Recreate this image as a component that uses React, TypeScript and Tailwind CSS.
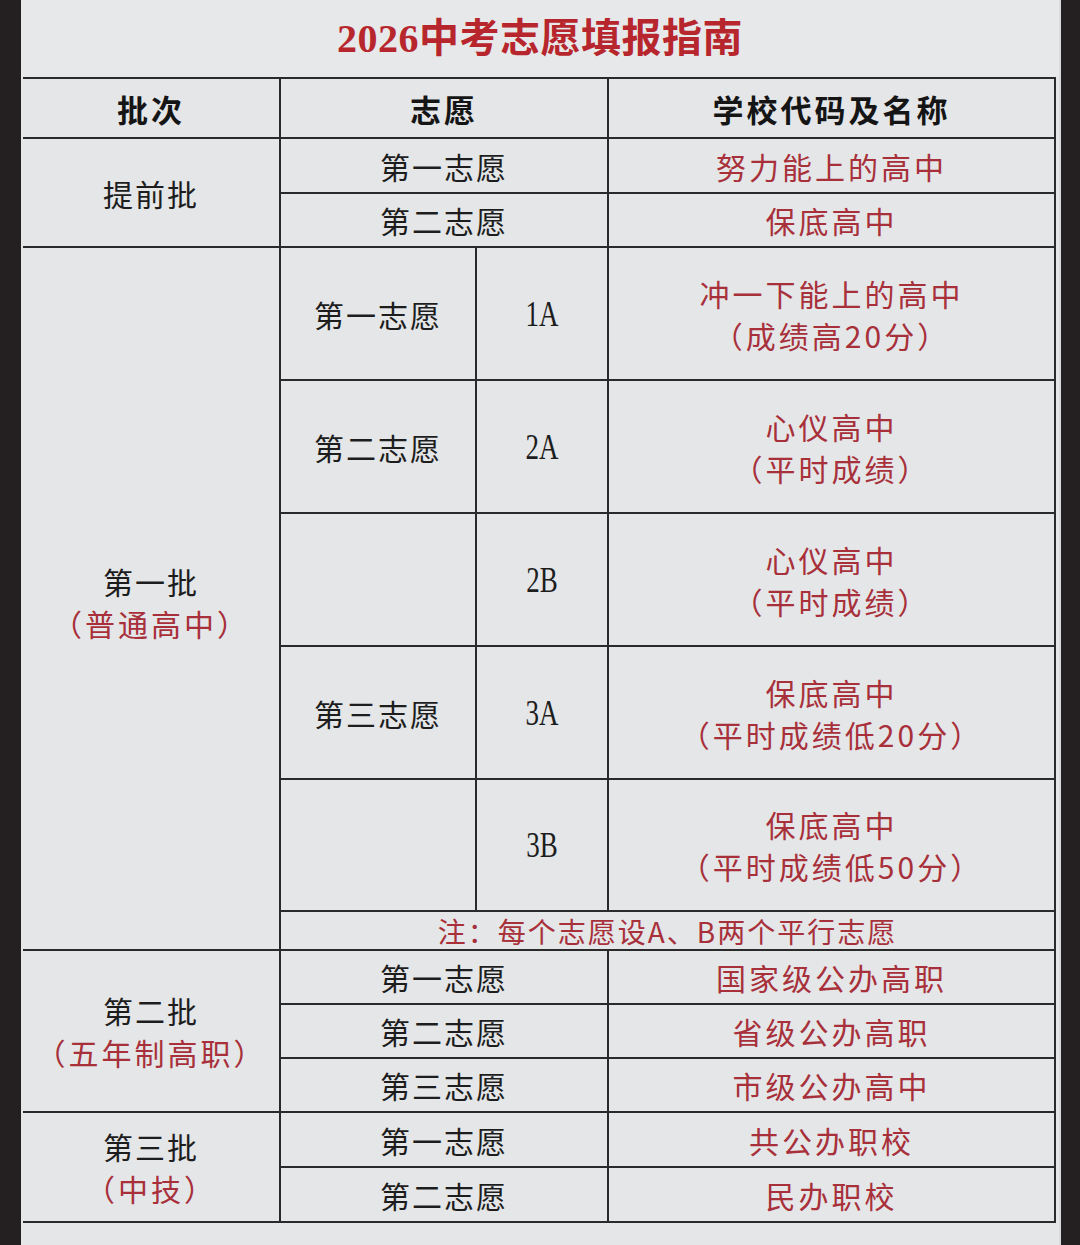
const cell = "flex flex-col items-center justify-center bg-[#e4e6e8] text-center";
const cjk = "font-['Noto_Sans_CJK_SC',sans-serif]";
const black = `${cjk} text-[30px] leading-none tracking-[2px] text-[#1d1d1d]`;
const blackLine = `${cjk} text-[30px] leading-[42px] tracking-[2px] text-[#1d1d1d]`;
const red = `${cjk} text-[30px] leading-[42px] tracking-[3px] text-[#a8303a]`;
const redOne = `${cjk} text-[30px] leading-none tracking-[3px] text-[#a8303a]`;
const redSub = `${cjk} text-[30px] leading-[42px] tracking-[3px] text-[#a8303a]`;
const head = `${cjk} text-[31px] leading-none font-bold tracking-[3px] text-[#151515]`;

const firstBatch = [
  { wish: "第一志愿", code: "1A", school: "冲一下能上的高中", note: "（成绩高20分）" },
  { wish: "第二志愿", code: "2A", school: "心仪高中", note: "（平时成绩）" },
  { wish: "", code: "2B", school: "心仪高中", note: "（平时成绩）" },
  { wish: "第三志愿", code: "3A", school: "保底高中", note: "（平时成绩低20分）" },
  { wish: "", code: "3B", school: "保底高中", note: "（平时成绩低50分）" },
];

function SimpleRow({ wish, school }: { wish: string; school: string }) {
  return (
    <>
      <div className={`${cell} col-span-2`}>
        <span className={black}>{wish}</span>
      </div>
      <div className={cell}>
        <span className={redOne}>{school}</span>
      </div>
    </>
  );
}

function BatchLabel({ name, sub, className }: { name: string; sub?: string; className: string }) {
  return (
    <div className={`${cell} ${className}`}>
      <span className={blackLine}>{name}</span>
      {sub && <span className={redSub}>{sub}</span>}
    </div>
  );
}

export default function App() {
  return (
    <div className="flex h-[1245px] w-[1080px] overflow-hidden bg-[#e4e6e8]">
      <div className="w-[21px] shrink-0 bg-[#241f20]" />
      <div className="flex w-[1038px] shrink-0 flex-col bg-[#e4e6e8]">
        <div className="flex h-[77px] items-center justify-center bg-[#e7e8ea]">
          <h1 className="font-['Liberation_Serif','Noto_Sans_CJK_SC',serif] text-[40px] font-bold leading-none tracking-[0.5px] text-[#b8262d]">
            2026中考志愿填报指南
          </h1>
        </div>
        <div className="ml-[2px] grid w-[1033px] grid-cols-[256px_194px_130px_445px] grid-rows-[58px_53px_52px_131px_131px_131px_131px_130px_37px_52px_52px_52px_53px_53px] gap-[2px] bg-[#2a2a2a] pt-[2px] pr-[2px] pb-[2px]">
          {/* header */}
          <div className={cell}>
            <span className={head}>批次</span>
          </div>
          <div className={`${cell} col-span-2`}>
            <span className={head}>志愿</span>
          </div>
          <div className={cell}>
            <span className={head}>学校代码及名称</span>
          </div>

          {/* 提前批 */}
          <BatchLabel name="提前批" className="row-span-2" />
          <SimpleRow wish="第一志愿" school="努力能上的高中" />
          <SimpleRow wish="第二志愿" school="保底高中" />

          {/* 第一批 */}
          <BatchLabel name="第一批" sub="（普通高中）" className="row-span-6 pt-[6px]" />
          {firstBatch.map((r) => (
            <div key={r.code} className="contents">
              <div className={cell}>
                <span className={black}>{r.wish}</span>
              </div>
              <div className={cell}>
                <span className="inline-block scale-x-75 font-['Liberation_Serif',serif] text-[36px] leading-none text-[#1d1d1d]">
                  {r.code}
                </span>
              </div>
              <div className={cell}>
                <span className={red}>{r.school}</span>
                <span className={red}>{r.note}</span>
              </div>
            </div>
          ))}
          <div className={`${cell} col-span-3`}>
            <span className={`${cjk} text-[28px] leading-none tracking-[2px] text-[#a8303a]`}>
              注：每个志愿设A、B两个平行志愿
            </span>
          </div>

          {/* 第二批 */}
          <BatchLabel name="第二批" sub="（五年制高职）" className="row-span-3" />
          <SimpleRow wish="第一志愿" school="国家级公办高职" />
          <SimpleRow wish="第二志愿" school="省级公办高职" />
          <SimpleRow wish="第三志愿" school="市级公办高中" />

          {/* 第三批 */}
          <BatchLabel name="第三批" sub="（中技）" className="row-span-2" />
          <SimpleRow wish="第一志愿" school="共公办职校" />
          <SimpleRow wish="第二志愿" school="民办职校" />
        </div>
      </div>
      <div className="w-[2px] shrink-0 bg-[#d8dadc]" />
      <div className="flex-1 bg-[#241f20]" />
    </div>
  );
}
